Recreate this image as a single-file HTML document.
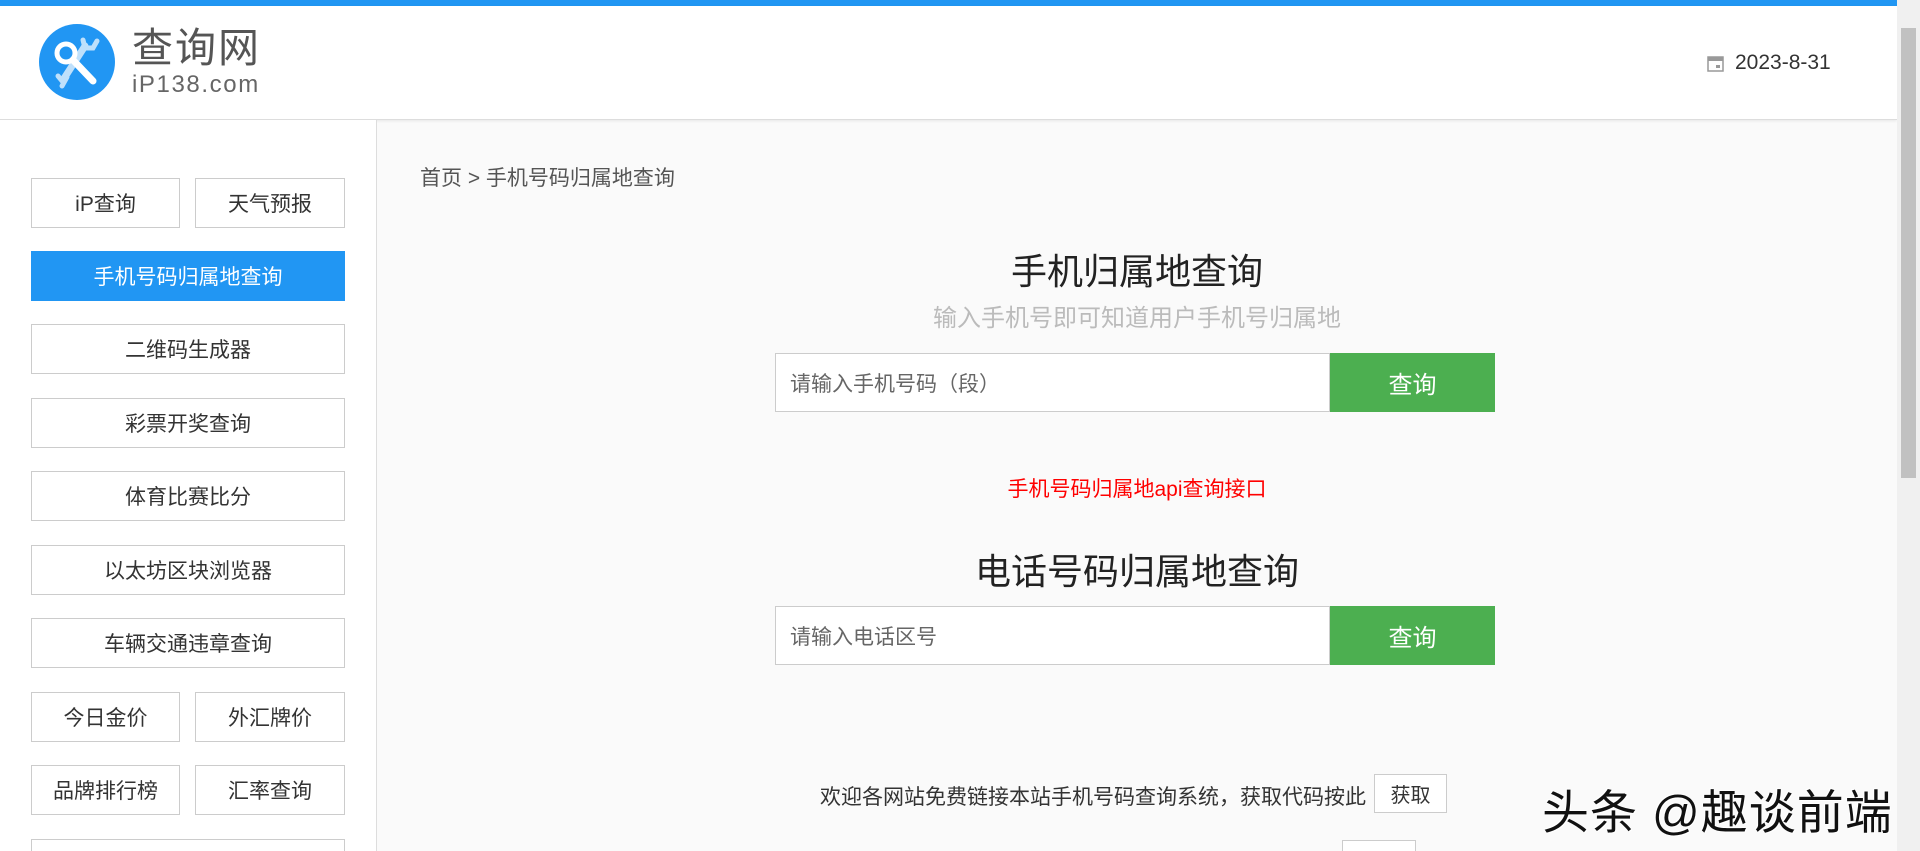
<!DOCTYPE html>
<html><head><meta charset="utf-8"><style>
*{margin:0;padding:0;box-sizing:border-box}
html,body{width:1920px;height:851px;overflow:hidden}
body{background:#fafafa;font-family:"Liberation Sans","Noto Sans CJK SC",sans-serif;position:relative;color:#333}
.top{position:absolute;left:0;top:0;width:1897px;height:6px;background:#2196f3}
.hdr{position:absolute;left:0;top:6px;width:1897px;height:114px;background:#fff;border-bottom:1px solid #ddd;box-shadow:0 1px 3px rgba(0,0,0,.08)}
.side{position:absolute;left:0;top:120px;width:377px;height:731px;background:#fff;border-right:1px solid #ddd;overflow:hidden}
.b{position:absolute;height:50px;border:1px solid #ccc;background:#fff;font-size:21px;color:#333;display:flex;align-items:center;justify-content:center}
.sb{position:absolute;left:1897px;top:0;width:23px;height:851px;background:#f0f0f0}
.inp{position:absolute;left:775px;width:555px;height:59px;border:1px solid #ccc;background:#fff;font-size:21px;color:#666;padding-left:14px;display:flex;align-items:center}
.go{position:absolute;left:1330px;width:165px;height:59px;background:#4caf50;color:#fff;font-size:24px;display:flex;align-items:center;justify-content:center}
.c{position:absolute;left:377px;width:1520px;text-align:center}
</style></head><body>
<div class="top"></div>
<div class="hdr">
<svg style="position:absolute;left:39px;top:18px" width="76" height="76" viewBox="0 0 76 76"><circle cx="38" cy="38" r="38" fill="#2196f3"/>
<path d="M46 22 L24 56" stroke="#bfe0fb" stroke-width="7" stroke-linecap="round"/>
<path d="M44 16 L46 24 L54 24 L58 17" stroke="#bfe0fb" stroke-width="5" fill="none" stroke-linecap="round"/>
<path d="M19 52 L24 58 M28 53 L23 62" stroke="#bfe0fb" stroke-width="5" stroke-linecap="round"/>
<circle cx="27" cy="29" r="9" fill="none" stroke="#fff" stroke-width="5"/>
<path d="M34 36 L54 57" stroke="#fff" stroke-width="7" stroke-linecap="round"/></svg>
<div style="position:absolute;left:132px;top:20px;font-size:41px;color:#555;letter-spacing:2px;line-height:44px">查询网</div>
<div style="position:absolute;left:132px;top:65px;font-size:24px;color:#666;letter-spacing:1.6px">iP138.com</div>
<svg style="position:absolute;left:1707px;top:49px" width="17" height="17" viewBox="0 0 17 17"><rect x="1" y="2" width="15" height="14" fill="none" stroke="#999" stroke-width="1.5"/><rect x="1" y="2" width="15" height="4" fill="#999"/><rect x="9" y="10" width="4" height="3" fill="#999"/></svg>
<div style="position:absolute;left:1735px;top:45px;font-size:21px;color:#333">2023-8-31</div>
</div>
<div class="side">
<div class="b" style="left:31px;top:58px;width:149px">iP查询</div>
<div class="b" style="left:195px;top:58px;width:150px">天气预报</div>
<div class="b" style="left:31px;top:131px;width:314px;background:#2196f3;border-color:#2196f3;color:#fff">手机号码归属地查询</div>
<div class="b" style="left:31px;top:204px;width:314px">二维码生成器</div>
<div class="b" style="left:31px;top:278px;width:314px">彩票开奖查询</div>
<div class="b" style="left:31px;top:351px;width:314px">体育比赛比分</div>
<div class="b" style="left:31px;top:425px;width:314px">以太坊区块浏览器</div>
<div class="b" style="left:31px;top:498px;width:314px">车辆交通违章查询</div>
<div class="b" style="left:31px;top:572px;width:149px">今日金价</div>
<div class="b" style="left:195px;top:572px;width:150px">外汇牌价</div>
<div class="b" style="left:31px;top:645px;width:149px">品牌排行榜</div>
<div class="b" style="left:195px;top:645px;width:150px">汇率查询</div>
<div class="b" style="left:31px;top:719px;width:314px"></div>
</div>
<div style="position:absolute;left:420px;top:162px;font-size:21px;color:#555">首页 &gt; 手机号码归属地查询</div>
<div class="c" style="top:243px;font-size:36px;color:#222">手机归属地查询</div>
<div class="c" style="top:298px;font-size:24px;color:#bbb">输入手机号即可知道用户手机号归属地</div>
<div class="inp" style="top:353px">请输入手机号码（段）</div>
<div class="go" style="top:353px">查询</div>
<div class="c" style="top:473px;font-size:21px;color:#f00">手机号码归属地api查询接口</div>
<div class="c" style="top:543px;font-size:36px;color:#222">电话号码归属地查询</div>
<div class="inp" style="top:606px">请输入电话区号</div>
<div class="go" style="top:606px">查询</div>
<div style="position:absolute;left:820px;top:781px;font-size:21px;color:#333">欢迎各网站免费链接本站手机号码查询系统，获取代码按此</div>
<div style="position:absolute;left:1374px;top:774px;width:73px;height:39px;border:1px solid #ccc;background:#fff;font-size:20px;display:flex;align-items:center;justify-content:center">获取</div>
<div style="position:absolute;left:1342px;top:840px;width:74px;height:11px;border:1px solid #ccc;border-bottom:none;background:#fff"></div>
<div style="position:absolute;left:1542px;top:774px;font-size:47px;color:#111;text-shadow:1px 1px 0 #fff,-1px -1px 0 #fff;white-space:nowrap;letter-spacing:1px">头条 @趣谈前端</div>
<div class="sb"><div style="position:absolute;left:4px;top:28px;width:15px;height:450px;background:#c1c1c1"></div></div>
</body></html>
